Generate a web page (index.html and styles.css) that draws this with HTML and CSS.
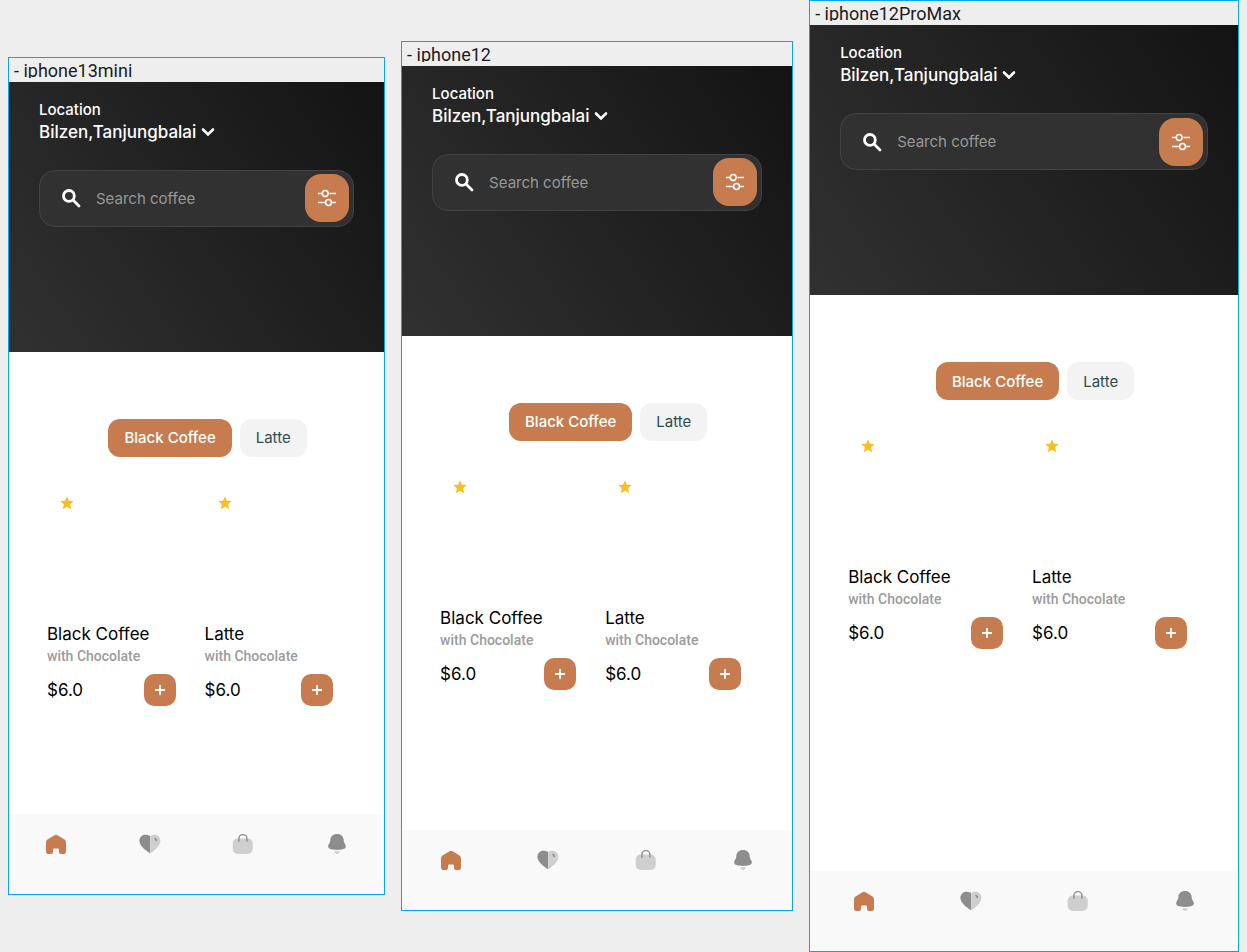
FILE: index.html
```html
<!DOCTYPE html>
<html lang="en">
<head>
<meta charset="utf-8">
<title>Coffee devices</title>
<link rel="stylesheet" href="styles.css">
</head>
<body>
<svg class="defs" aria-hidden="true">
  <symbol id="chevron" viewBox="0 0 16 16"><path d="M3 5.500l5 5 5-5" fill="none" stroke="currentColor" stroke-width="2.600" stroke-linecap="round"/></symbol>
  <symbol id="search" viewBox="0 0 24 24"><g fill="none" stroke="currentColor" stroke-width="2.800"><circle cx="9.900" cy="9.900" r="5.400"/><path d="M14 13.900l6 6" stroke-linecap="round"/></g></symbol>
  <symbol id="filter" viewBox="0 0 24 24"><g fill="none" stroke="currentColor" stroke-width="1.500"><circle cx="10.200" cy="7.500" r="2.900"/><path d="M3 7.500h4.300M14.500 7.500H21M3 16.500h6.800M17 16.500h4"/><circle cx="13.500" cy="16.500" r="2.900"/></g></symbol>
  <symbol id="star" viewBox="0 0 14 14"><path fill="#fbbe21" d="M7 .2l1.900 4.500 4.900.4-3.700 3.200 1.100 5L7 10.700l-4.200 2.600 1.100-5L.2 5.100l4.900-.4z"/></symbol>
  <symbol id="plus" viewBox="0 0 16 16"><path d="M8 3v10M3 8h10" fill="none" stroke="currentColor" stroke-width="1.800"/></symbol>
  <symbol id="home" viewBox="0 0 24 24"><path fill="#c67c4e" d="M10.500 3.200q1.500-.8 3 0l7 4.400Q22 8.600 22 10.400v8.800Q22 22 19.200 22h-2.200q-2 0-2-2v-2.300q0-1.200-1.200-1.200h-3.600q-1.200 0-1.200 1.200V20q0 2-2 2H4.800Q2 22 2 19.200v-8.800q0-1.800 1.500-2.800z"/></symbol>
  <symbol id="heart" viewBox="0 0 24 24"><path fill="#8d8d8d" d="M12.200 4.100C10.700 3.100 9 2.700 7.400 2.700c-3.500 0-6 2.600-6 6.100 0 5 5.400 8.700 8.800 11.400q1 .8 2 .8z"/><path fill="#cfcfcf" d="M12.200 4.100c1.300-1 2.700-1.400 4.200-1.400 3.500 0 6 2.600 6 6.100 0 5-5.100 8.700-8.200 11.400q-1 .8-2 .8z"/><path d="M16.500 6.200q1.800.7 2 2.900" fill="none" stroke="#8d8d8d" stroke-width="1.600"/></symbol>
  <symbol id="bag" viewBox="0 0 24 24"><rect x="1.700" y="6.500" width="20" height="15.500" rx="5" fill="#cfcfcf"/><path d="M7.900 9.700V6.600a4 4 0 0 1 8 0v3.100" fill="none" stroke="#8d8d8d" stroke-width="1.400"/></symbol>
  <symbol id="bell" viewBox="0 0 24 24"><path fill="#8d8d8d" d="M12 2c4 0 6.600 2.500 6.600 6.100 0 3.200 2.300 4.200 2.300 6.400 0 2.400-4 3.400-8.900 3.400s-8.900-1-8.900-3.400c0-2.200 2.300-3.200 2.300-6.400C5.400 4.500 8 2 12 2z"/><path fill="#cfcfcf" d="M9 19.200h6q-.6 2.800-3 2.800t-3-2.800z"/></symbol>
</svg>
<main class="board">
  <section class="device device-mini">
    <h2 class="label">- iphone13mini</h2>
    <div class="screen">
      <header class="hero">
        <p class="caption">Location</p>
        <button class="place" type="button">Bilzen,Tanjungbalai <svg><use href="#chevron"/></svg></button>
        <form class="search">
          <svg><use href="#search"/></svg>
          <input type="text" placeholder="Search coffee" aria-label="Search coffee">
          <button class="filter" type="button" aria-label="Filter"><svg><use href="#filter"/></svg></button>
        </form>
      </header>
      <div class="chips"><button class="chip active" type="button">Black Coffee</button><button class="chip" type="button">Latte</button></div>
      <div class="cards">
        <article class="card">
          <svg class="star"><use href="#star"/></svg>
          <h3>Black Coffee</h3>
          <p class="note">with Chocolate</p>
          <div class="buy"><span>$6.0</span><button type="button" aria-label="Add Black Coffee"><svg><use href="#plus"/></svg></button></div>
        </article>
        <article class="card">
          <svg class="star"><use href="#star"/></svg>
          <h3>Latte</h3>
          <p class="note">with Chocolate</p>
          <div class="buy"><span>$6.0</span><button type="button" aria-label="Add Latte"><svg><use href="#plus"/></svg></button></div>
        </article>
      </div>
      <nav class="tabs">
        <a href="#" aria-label="Home"><svg><use href="#home"/></svg></a>
        <a href="#" aria-label="Favorites"><svg><use href="#heart"/></svg></a>
        <a href="#" aria-label="Bag"><svg><use href="#bag"/></svg></a>
        <a href="#" aria-label="Notifications"><svg><use href="#bell"/></svg></a>
      </nav>
    </div>
  </section>
  <section class="device device-regular">
    <h2 class="label">- iphone12</h2>
    <div class="screen">
      <header class="hero">
        <p class="caption">Location</p>
        <button class="place" type="button">Bilzen,Tanjungbalai <svg><use href="#chevron"/></svg></button>
        <form class="search">
          <svg><use href="#search"/></svg>
          <input type="text" placeholder="Search coffee" aria-label="Search coffee">
          <button class="filter" type="button" aria-label="Filter"><svg><use href="#filter"/></svg></button>
        </form>
      </header>
      <div class="chips"><button class="chip active" type="button">Black Coffee</button><button class="chip" type="button">Latte</button></div>
      <div class="cards">
        <article class="card">
          <svg class="star"><use href="#star"/></svg>
          <h3>Black Coffee</h3>
          <p class="note">with Chocolate</p>
          <div class="buy"><span>$6.0</span><button type="button" aria-label="Add Black Coffee"><svg><use href="#plus"/></svg></button></div>
        </article>
        <article class="card">
          <svg class="star"><use href="#star"/></svg>
          <h3>Latte</h3>
          <p class="note">with Chocolate</p>
          <div class="buy"><span>$6.0</span><button type="button" aria-label="Add Latte"><svg><use href="#plus"/></svg></button></div>
        </article>
      </div>
      <nav class="tabs">
        <a href="#" aria-label="Home"><svg><use href="#home"/></svg></a>
        <a href="#" aria-label="Favorites"><svg><use href="#heart"/></svg></a>
        <a href="#" aria-label="Bag"><svg><use href="#bag"/></svg></a>
        <a href="#" aria-label="Notifications"><svg><use href="#bell"/></svg></a>
      </nav>
    </div>
  </section>
  <section class="device device-max">
    <h2 class="label">- iphone12ProMax</h2>
    <div class="screen">
      <header class="hero">
        <p class="caption">Location</p>
        <button class="place" type="button">Bilzen,Tanjungbalai <svg><use href="#chevron"/></svg></button>
        <form class="search">
          <svg><use href="#search"/></svg>
          <input type="text" placeholder="Search coffee" aria-label="Search coffee">
          <button class="filter" type="button" aria-label="Filter"><svg><use href="#filter"/></svg></button>
        </form>
      </header>
      <div class="chips"><button class="chip active" type="button">Black Coffee</button><button class="chip" type="button">Latte</button></div>
      <div class="cards">
        <article class="card">
          <svg class="star"><use href="#star"/></svg>
          <h3>Black Coffee</h3>
          <p class="note">with Chocolate</p>
          <div class="buy"><span>$6.0</span><button type="button" aria-label="Add Black Coffee"><svg><use href="#plus"/></svg></button></div>
        </article>
        <article class="card">
          <svg class="star"><use href="#star"/></svg>
          <h3>Latte</h3>
          <p class="note">with Chocolate</p>
          <div class="buy"><span>$6.0</span><button type="button" aria-label="Add Latte"><svg><use href="#plus"/></svg></button></div>
        </article>
      </div>
      <nav class="tabs">
        <a href="#" aria-label="Home"><svg><use href="#home"/></svg></a>
        <a href="#" aria-label="Favorites"><svg><use href="#heart"/></svg></a>
        <a href="#" aria-label="Bag"><svg><use href="#bag"/></svg></a>
        <a href="#" aria-label="Notifications"><svg><use href="#bell"/></svg></a>
      </nav>
    </div>
  </section>
</main>
</body>
</html>
```
FILE: styles.css
```css
* { box-sizing: border-box; }
body { margin: 0; background: #eeeeee; font-family: Inter, sans-serif; }
h2, h3, p { margin: 0; font-weight: 400; }
button, input { font: inherit; border: 0; padding: 0; margin: 0; color: inherit; }
svg { display: block; flex: none; width: 24px; height: 24px; }
.defs { display: none; }

.board { display: flex; align-items: center; gap: 16px; padding: 0 8px; min-height: 100vh; }
.device { min-width: 0; border: 1px solid #00a8f0; }
.device-mini { flex: 377 1 0; }
.device-regular { flex: 392 1 0; }
.device-max { flex: 430 1 0; }
.label { height: 20px; margin-bottom: 4px; padding-left: 5px; overflow: hidden; font: 400 18px/26px Roboto, sans-serif; color: #1b1b1f; white-space: nowrap; }
.screen { display: flex; flex-direction: column; background: #fff; }
.device-mini .screen { aspect-ratio: 375 / 812; }
.device-regular .screen { aspect-ratio: 390 / 844; }
.device-max .screen { aspect-ratio: 428 / 926; }

.hero { height: 270px; padding: 18px 30px; background: linear-gradient(55deg, #313131, #131313); color: #fff; }
.caption { font-size: 15px; line-height: 20px; font-weight: 500; }
.place { display: flex; align-items: center; gap: 4px; height: 24px; background: none; font-size: 17px; font-weight: 500; white-space: nowrap; }
.place svg { width: 16px; height: 16px; }
.search { display: flex; align-items: center; height: 57px; margin-top: 26px; padding: 0 4px 0 19px; border: 1px solid #424248; border-radius: 16px; background: #313131; }
.search input { flex: 1; min-width: 0; height: 40px; margin-left: 13px; background: none; font-size: 15px; }
.search input::placeholder { color: #989898; opacity: 1; }
.filter { display: grid; place-items: center; width: 44px; height: 48px; border-radius: 16px; background: #c67c4e; }

.chips { display: flex; justify-content: center; gap: 8px; margin-top: 67px; padding: 0 8px 0 30px; }
.chip { height: 38px; padding: 0 16px; border-radius: 12px; background: #f3f3f3; color: #2f4b4e; font-size: 15px; white-space: nowrap; }
.chip.active { background: #c67c4e; color: #fff; font-weight: 500; }

.cards { display: grid; grid-template-columns: 1fr 1fr; margin-top: 39px; padding: 0 30px; }
.card { padding: 0 21px 0 8px; color: #000; }
.star { width: 14px; height: 14px; margin: 0 0 112px 13px; }
.card h3 { font-size: 17px; line-height: 24px; white-space: nowrap; }
.note { font: 500 14px/20px Roboto, sans-serif; color: #9b9b9b; }
.buy { display: flex; align-items: center; justify-content: space-between; margin-top: 8px; font-size: 17px; }
.buy button { display: grid; place-items: center; width: 32px; height: 32px; border-radius: 10px; background: #c67c4e; color: #fff; }
.buy svg { width: 16px; height: 16px; }

.tabs { display: grid; grid-template-columns: repeat(4, 1fr); justify-items: center; height: 80px; margin-top: auto; padding-top: 18px; background: #f9f9f9; }
```
